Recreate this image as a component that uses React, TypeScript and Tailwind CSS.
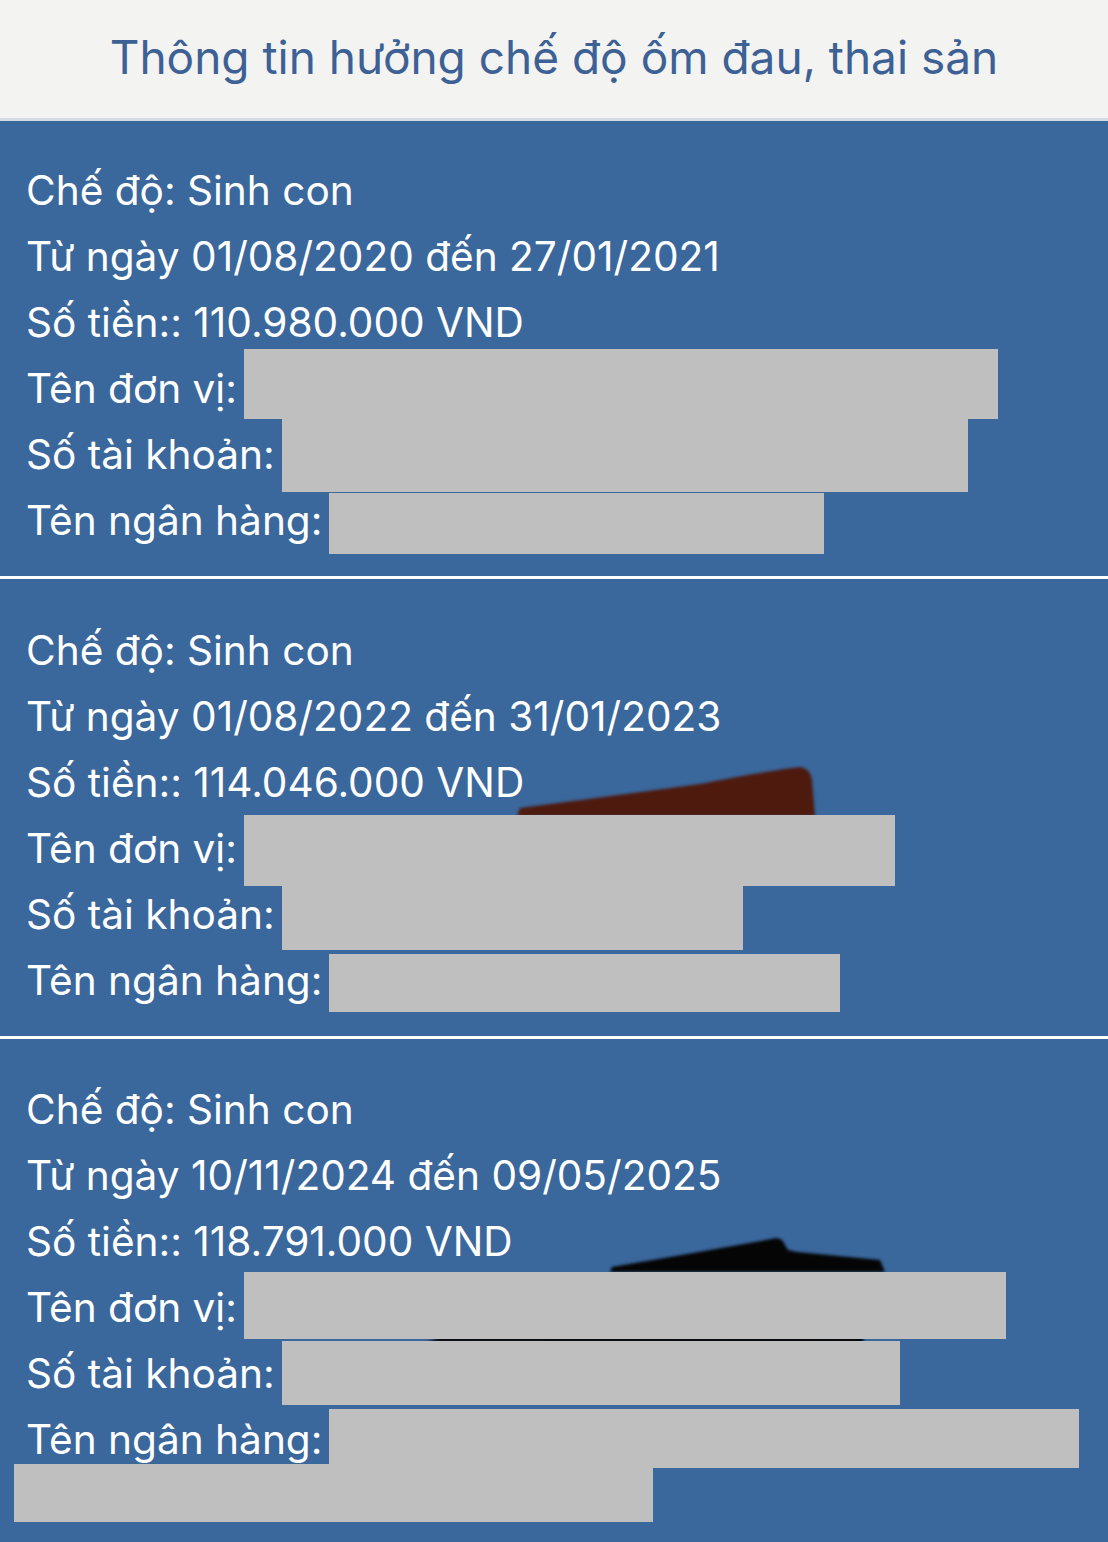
const sections = [
  {
    from: "01/08/2020",
    to: "27/01/2021",
    amount: "110.980.000",
    pad: "pt-[37px] pb-[22px]",
    boxes: [
      { w: "w-[754px]", h: "h-[70px]", mt: "mt-[-10px]" },
      { w: "w-[686px]", h: "h-[74px]", mt: "mt-[0px]" },
      { w: "w-[495px]", h: "h-[61px]", mt: "mt-[4px]" },
    ],
  },
  {
    from: "01/08/2022",
    to: "31/01/2023",
    amount: "114.046.000",
    pad: "pt-[39px] pb-[22px]",
    boxes: [
      { w: "w-[651px]", h: "h-[71px]", mt: "mt-[2px]" },
      { w: "w-[461px]", h: "h-[66px]", mt: "mt-[4px]" },
      { w: "w-[511px]", h: "h-[58px]", mt: "mt-[4px]" },
    ],
  },
  {
    from: "10/11/2024",
    to: "09/05/2025",
    amount: "118.791.000",
    pad: "pt-[38px] pb-[22px]",
    boxes: [
      { w: "w-[762px]", h: "h-[67px]", mt: "mt-[-6px]" },
      { w: "w-[618px]", h: "h-[64px]", mt: "mt-[-2px]" },
      { w: "w-[750px]", h: "h-[59px]", mt: "mt-[-4px]" },
    ],
  },
]

const labels = ["Tên đơn vị:", "Số tài khoản:", "Tên ngân hàng:"]

function Section({ s, idx }: { s: (typeof sections)[number]; idx: number }) {
  return (
    <div className={`relative px-[26px] ${s.pad}`}>
      <div className="h-[66px] flex items-center">Chế độ: Sinh con</div>
      <div className="h-[66px] flex items-center">
        Từ ngày {s.from} đến {s.to}
      </div>
      <div className="h-[66px] flex items-center">Số tiền:: {s.amount} VND</div>
      {labels.map((l, i) => (
        <div key={l} className="relative h-[66px] flex items-center">
          <span>{l}</span>
          <div className={`${s.boxes[i].w} ${s.boxes[i].h} ${s.boxes[i].mt} relative z-10 ml-[7px] shrink-0 bg-[#bfbfbf]`} />
        </div>
      ))}
      {idx === 2 && (
        <div className="relative z-10 -ml-[12px] mt-[-9px] w-[639px] h-[58px] bg-[#bfbfbf]" />
      )}
    </div>
  )
}

export default function App() {
  return (
    <div
      className="relative w-[1108px] min-h-[1542px] bg-[#3a679c] text-white text-[40.6px] leading-none"
      style={{ fontFamily: "Inter, 'Noto Sans', sans-serif" }}
    >
      {/* scribbles left on the screenshot */}
      <svg className="absolute left-0 top-0 blur-[1.5px]" width="1108" height="1542">
        <path d="M517 816 L520 808 Q620 795 700 784 Q760 772 800 767 Q810 768 812 780 L815 816 Z" fill="#4e1a0e" />
        <path d="M610 1272 L612 1267 Q700 1252 777 1238 L782 1240 L788 1250 L797 1252 L880 1260 L885 1272 Z" fill="#050505" />
        <path d="M427 1342 L440 1337 L865 1337 L862 1343 Z" fill="#050505" />
      </svg>
      <div className="relative h-[121px] bg-[#f3f3f2] border-b-[3px] border-[#d5dbe2] flex items-center justify-center">
        <h1 className="text-[46px] text-[#3d6194] font-normal -mt-[4px]">
          Thông tin hưởng chế độ ốm đau, thai sản
        </h1>
      </div>
      {sections.map((s, i) => (
        <div key={i}>
          {i > 0 && <div className="h-[3px] bg-white" />}
          <Section s={s} idx={i} />
        </div>
      ))}
    </div>
  )
}
